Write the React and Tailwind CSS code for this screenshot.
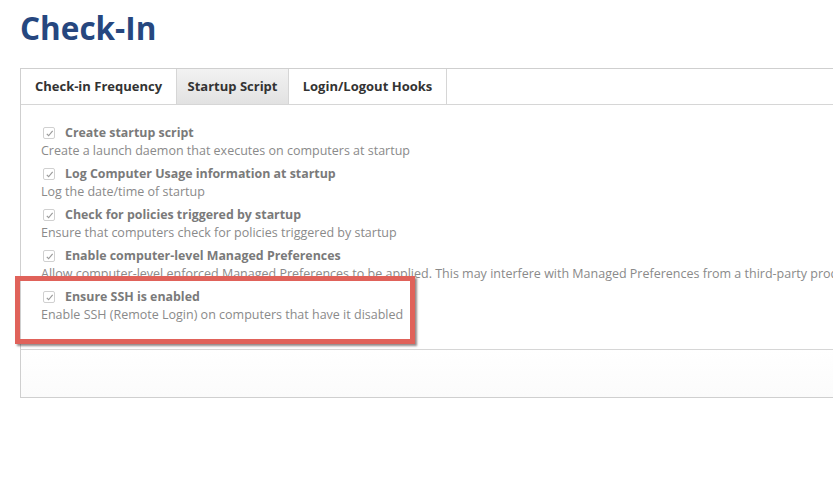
export default function App() {
    const options = [
        {
            label: "Create startup script",
            desc: "Create a launch daemon that executes on computers at startup",
        },
        {
            label: "Log Computer Usage information at startup",
            desc: "Log the date/time of startup",
        },
        {
            label: "Check for policies triggered by startup",
            desc: "Ensure that computers check for policies triggered by startup",
        },
        {
            label: "Enable computer-level Managed Preferences",
            desc: "Allow computer-level enforced Managed Preferences to be applied. This may interfere with Managed Preferences from a third-party product",
        },
        {
            label: "Ensure SSH is enabled",
            desc: "Enable SSH (Remote Login) on computers that have it disabled",
        },
    ];

    const tabs = [
        { name: "Check-in Frequency", w: "w-[156px]" },
        { name: "Startup Script", w: "w-[112px]" },
        { name: "Login/Logout Hooks", w: "w-[158px]" },
    ];

    return (
        <div className="relative w-[833px] h-[504px] overflow-hidden bg-white font-['Open_Sans',sans-serif]">
            <h1 className="pl-[20px] pt-[8px] text-[31.5px] leading-[40px] font-bold text-[#26477f]">
                Check-In
            </h1>

            {/* PANEL */}
            <div className="ml-[20px] mt-[20px] w-[900px] border-l border-t border-b border-[#cfcfcf]">
                <div className="flex h-[36px] border-b border-[#d6d6d6]">
                    {tabs.map((t, i) => (
                        <div
                            key={t.name}
                            className={
                                (i === 1
                                    ? "bg-gradient-to-b from-[#f2f2f2] to-[#e2e2e2] "
                                    : "") +
                                t.w +
                                " flex items-center justify-center whitespace-nowrap border-r border-[#d6d6d6] text-[13px] font-bold text-[#333]"
                            }
                        >
                            {t.name}
                        </div>
                    ))}
                </div>

                <div className="h-[245px] pt-[19px] pl-[20px] flex flex-col gap-[5px] border-b border-[#d6d6d6]">
                    {options.map((o) => (
                        <div key={o.label} className="whitespace-nowrap">
                            <div className="flex items-center h-[18px] pl-[2px] gap-[10px]">
                                <span className="flex items-center justify-center w-[12px] h-[12px] border border-[#d0d0d0] rounded-[2px] bg-white">
                                    <svg width="9" height="9" viewBox="0 0 10 10">
                                        <path d="M2 5.5 L4 7.5 L8.5 2" fill="none" stroke="#9a9a9a" strokeWidth="1.3" />
                                    </svg>
                                </span>
                                <span className="text-[12.4px] font-bold text-[#7a7a7a]">{o.label}</span>
                            </div>
                            <div className="h-[18px] leading-[18px] text-[12.5px] text-[#8a8a8a]">{o.desc}</div>
                        </div>
                    ))}
                </div>

                <div className="h-[47px] bg-gradient-to-b from-white to-[#fbfbfb]"></div>
            </div>

            {/* HIGHLIGHT */}
            <div className="absolute left-[15px] top-[276px] w-[400px] h-[68px] border-[5px] border-[#e0625a] shadow-[2px_2px_2px_rgba(60,40,40,0.55)]"></div>
        </div>
    );
}
